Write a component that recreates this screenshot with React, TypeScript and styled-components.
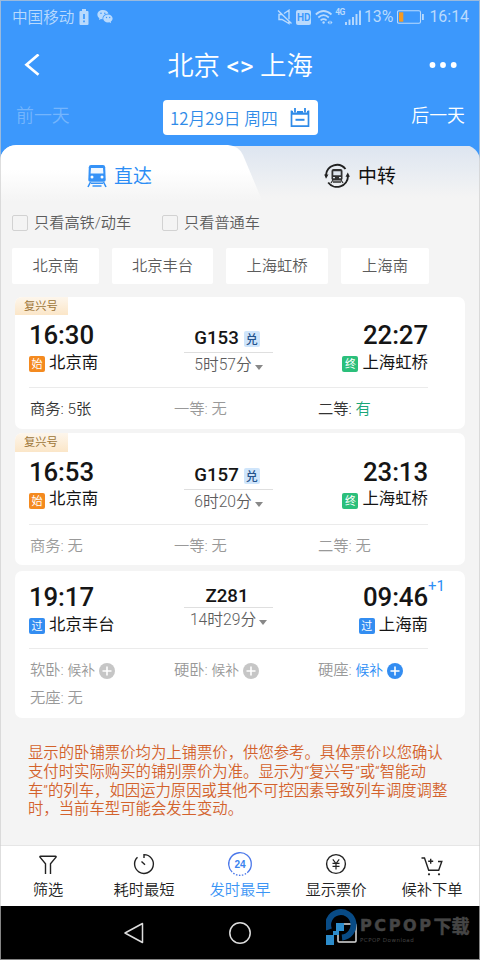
import React from 'react';
import styled, { createGlobalStyle, css } from 'styled-components';

const CJK = '"Noto Sans CJK SC", sans-serif';
const MIX = 'Roboto, "Noto Sans CJK SC", sans-serif';

const Global = createGlobalStyle`
  * { box-sizing: border-box; }
  body { margin: 0; background: #f4f4f4; font-family: ${MIX}; }
`;

const Screen = styled.div`
  position: relative;
  display: flex;
  flex-direction: column;
  width: 480px;
  height: 960px;
  overflow: hidden;
  background: #f4f4f4;
  white-space: nowrap;
  &::after {
    content: '';
    position: absolute;
    inset: 0;
    border: 1px solid rgba(205, 205, 205, 0.65);
    pointer-events: none;
  }
`;

const Header = styled.header`
  height: 165px;
  margin-bottom: -20px;
  background: #3c98fc;
  color: #fff;
`;

const StatusBar = styled.div`
  display: flex;
  justify-content: space-between;
  height: 34px;
  padding: 0 11px 0 12px;
  color: #b9dafd;
  line-height: 34px;
`;

const StatusGroup = styled.div`
  display: flex;
  align-items: center;
`;

const Carrier = styled.span`
  margin-right: 5px;
  font: 350 15.6px/30px ${CJK};
  margin-top: -3px;
`;

const WechatSlot = styled.span`
  display: flex;
  margin-left: 8px;
`;

const ChargeSlot = styled.span`
  display: flex;
  margin-left: 4px;
`;

const StatusValue = styled.span<{ $gap: number }>`
  margin-left: ${(p) => p.$gap}px;
  font-size: 15.9px;
`;

const HdBadge = styled.span`
  width: 15px;
  height: 15px;
  margin: 0 4px 0 3px;
  border-radius: 2px;
  background: #b9dafd;
  color: #3c98fc;
  font: 700 10px/15px Roboto, sans-serif;
  text-align: center;
`;

const Network = styled.span`
  align-self: flex-start;
  margin: 7px 0 0 2px;
  font: 700 8.5px/10px "Roboto", sans-serif;
  letter-spacing: -0.5px;
`;

const TitleBar = styled.div`
  display: grid;
  grid-template-columns: 60px 1fr 60px;
  align-items: center;
  height: 62px;
`;

const Title = styled.h1`
  margin: 0;
  font: 350 26.4px/64px ${MIX};
  text-align: center;
`;

const Arrows = styled.span`
  font-weight: 400;
`;

const DateRow = styled.div`
  display: grid;
  grid-template-columns: 147px 155px 147px;
  align-items: center;
  height: 35px;
  margin: 4px 0 0 16px;
`;

const DayLink = styled.span<{ $dim?: boolean }>`
  font: 350 17.9px/30px ${CJK};
  color: ${(p) => (p.$dim ? '#74b5fd' : '#fff')};
  text-align: ${(p) => (p.$dim ? 'left' : 'right')};
  margin-top: -8px;
`;

const DateBox = styled.div`
  display: flex;
  align-items: center;
  justify-content: space-between;
  height: 35px;
  padding: 0 8px 0 7px;
  border-radius: 4px;
  background: #fff;
  color: #2f8be8;
  font: 350 16.8px/32px ${CJK};
`;

const Tabs = styled.div`
  position: relative;
  flex: none;
  display: grid;
  grid-template-columns: 240px 240px;
  height: 60px;
  border-radius: 16px 16px 0 0;
  background: linear-gradient(#3c98fc 1px, transparent 1px),
    linear-gradient(#dde5f0, #f4f4f4 88%);
  overflow: hidden;
`;

const TabShape = styled.div`
  grid-area: 1 / 1 / 2 / 3;
  width: 264px;
  background: linear-gradient(#fff 40%, #f4f4f4 92%);
  clip-path: path('M0 0 H228 Q239 1 243 10 L264 60 H0 Z');
`;

const Tab = styled.div<{ $column: number; $active?: boolean }>`
  grid-area: 1 / ${(p) => p.$column};
  z-index: 1;
  display: flex;
  align-items: center;
  gap: ${(p) => (p.$active ? 7 : 8)}px;
  padding-left: ${(p) => (p.$active ? 87 : 84)}px;
  height: 62px;
  color: ${(p) => (p.$active ? '#2c8df5' : '#111')};
  font: 400 18.9px/60px ${CJK};
`;

const TabLabel = styled.span`
  margin-top: -2px;
`;

const Checks = styled.div`
  display: flex;
  align-items: center;
  height: 36px;
  padding-left: 12px;
  color: #5c5c5c;
  font: 350 15.2px/37px ${MIX};
`;

const Check = styled.label<{ $width: number }>`
  display: flex;
  align-items: center;
  gap: 6px;
  width: ${(p) => p.$width}px;
`;

const Box = styled.span`
  width: 16px;
  height: 16px;
  border: 1px solid #d2d2d2;
  border-radius: 2px;
`;

const Chips = styled.div`
  display: grid;
  grid-template-columns: 87px 101px 102px 88px;
  column-gap: 13px;
  height: 36px;
  margin: 7px 0 13px 12px;
`;

const Chip = styled.button`
  padding: 0 0 4px 0;
  border: 0;
  border-radius: 2px;
  background: #fff;
  color: #5c5c5c;
  font: 350 15.3px/32px ${CJK};
`;

const Card = styled.article<{ $height: number; $gap: number }>`
  flex: none;
  display: flex;
  flex-direction: column;
  height: ${(p) => p.$height}px;
  margin: 0 15px ${(p) => p.$gap}px;
  border-radius: 7px;
  background: #fff;
  overflow: hidden;
`;

const Tag = styled.div<{ $height: number }>`
  width: 53px;
  height: ${(p) => p.$height}px;
  padding-left: 9px;
  background: linear-gradient(#fdf6ec, #fbe6c8);
  color: #9c7537;
  font: 400 11.3px/${(p) => p.$height - 2}px ${CJK};
`;

const Trip = styled.div<{ $top: number; $height: number }>`
  display: grid;
  grid-template-columns: 140px 1fr 140px;
  height: ${(p) => p.$height}px;
  margin: 0 37px 0 14px;
  padding-top: ${(p) => p.$top}px;
  border-bottom: 1px solid #ebebeb;
`;

const Stop = styled.div<{ $end?: boolean }>`
  display: flex;
  flex-direction: column;
  align-items: ${(p) => (p.$end ? 'flex-end' : 'flex-start')};
`;

const Time = styled.div`
  position: relative;
  height: 28px;
  font: 500 25.8px/28px Roboto, sans-serif;
  letter-spacing: -0.1px;
  color: #151515;
`;

const DayOffset = styled.sup`
  position: absolute;
  left: 100%;
  top: -6px;
  color: #2c8df5;
  font: 400 15px/18px Roboto, sans-serif;
`;

const Station = styled.div`
  display: flex;
  align-items: center;
  height: 27px;
  gap: 4px;
  color: #151515;
  font: 400 16.4px/26px ${CJK};
`;

const StationName = styled.span<{ $lift: number }>`
  margin-top: ${(p) => -p.$lift}px;
`;

const badgeColors = { 始: '#f48a1f', 终: '#2bbf7b', 过: '#338df1' } as const;
type Kind = keyof typeof badgeColors;

const Badge = styled.span<{ $kind: Kind }>`
  width: 16px;
  height: 16px;
  margin-top: 3px;
  border-radius: 2px;
  background: ${(p) => badgeColors[p.$kind]};
  color: #fff;
  font: 400 11px/15px ${CJK};
  text-align: center;
`;

const Middle = styled.div<{ $shift: number }>`
  display: flex;
  flex-direction: column;
  align-items: center;
  padding-top: ${(p) => p.$shift}px;
`;

const Train = styled.div`
  display: flex;
  align-items: center;
  gap: 5px;
  height: 24px;
  margin-left: -3px;
  color: #151515;
  font: 500 18.7px/24px Roboto, sans-serif;
`;

const Exchange = styled.span`
  width: 16px;
  height: 16px;
  margin-top: 1px;
  border-radius: 2px;
  background: #cfe5fb;
  color: #24538c;
  font: 500 12px/15px ${CJK};
  text-align: center;
`;

const Track = styled.div<{ $gap: number }>`
  flex: none;
  width: 89px;
  height: 1px;
  margin-top: ${(p) => p.$gap}px;
  background: #dfdfdf;
`;

const Duration = styled.div`
  display: flex;
  align-items: center;
  gap: 3px;
  height: 24px;
  color: #5c5c5c;
  font: 350 15.7px/24px ${MIX};
`;

const Caret = styled.span`
  margin-top: 4px;
  border: 4.5px solid transparent;
  border-top: 5.5px solid #888;
  border-bottom: 0;
`;

const Seats = styled.div<{ $top: number }>`
  display: grid;
  grid-template-columns: repeat(3, 144px);
  grid-auto-rows: 28px;
  padding: ${(p) => p.$top}px 0 0 15px;
`;

const tones = { dark: '#333', muted: '#999' };

const Seat = styled.div<{ $tone: keyof typeof tones }>`
  display: flex;
  align-items: center;
  color: ${(p) => tones[p.$tone]};
  font: 350 15.3px/28px ${MIX};
  white-space: pre;
`;

const Value = styled.span<{ $color?: string; $small?: boolean }>`
  ${(p) => p.$color && css`color: ${p.$color};`}
  ${(p) => p.$small && css`font-size: 13.8px;`}
`;

const Plus = styled.span<{ $active?: boolean }>`
  display: grid;
  place-items: center;
  width: 16px;
  height: 16px;
  margin: 1px 0 0 4px;
  border-radius: 50%;
  background: ${(p) => (p.$active ? '#338df1' : '#c6c6c6')};
`;

const Notice = styled.p`
  flex: 1;
  margin: 0;
  padding: 26px 0 0 28px;
  color: #d3622c;
  font: 350 15.36px/18.75px ${MIX};
  white-space: pre;
`;

const BottomNav = styled.nav`
  flex: none;
  display: grid;
  grid-template-columns: repeat(5, 96px);
  height: 61px;
  border-top: 1px solid #e6e6e6;
  background: #fff;
`;

const NavItem = styled.div<{ $active?: boolean }>`
  display: flex;
  flex-direction: column;
  align-items: center;
  padding-top: 4px;
  color: ${(p) => (p.$active ? '#3b95f5' : '#222')};
  font: 350 15.3px/20px ${CJK};
`;

const SystemBar = styled.footer`
  position: relative;
  flex: none;
  display: grid;
  grid-template-columns: 80px 107px 106px 107px 80px;
  place-items: center;
  height: 54px;
  background: #000;
`;

const Key = styled.span<{ $column: number }>`
  grid-column: ${(p) => p.$column};
  height: 24px;
`;

const Watermark = styled.div`
  position: absolute;
  left: 326px;
  top: 3px;
  display: flex;
  gap: 3px;
`;

const Brand = styled.div`
  display: flex;
  flex-direction: column;
  padding-top: 8px;
  color: #454545;
`;

const BrandName = styled.span`
  display: flex;
  height: 18px;
  font: 700 16px/18px "DejaVu Sans", sans-serif;
  letter-spacing: 2.6px;
  -webkit-text-stroke: 0.5px #454545;
`;

const BrandSuffix = styled.span`
  font: 700 18px/16px ${CJK};
  letter-spacing: 0;
`;

const BrandSub = styled.span`
  margin-top: 2px;
  font: 400 5.5px/7px "DejaVu Sans", sans-serif;
  letter-spacing: 0.5px;
`;

const Battery = () => (
  <svg width="10" height="17" viewBox="0 0 10 17">
    <path d="M3 0h4v2h1.5q1 0 1 1v12q0 1-1 1h-7q-1 0-1-1V3q0-1 1-1H3z" fill="#b9dafd" />
    <path d="M5 5v5M5 11.5v1.8" stroke="#3c98fc" strokeWidth="1.7" />
  </svg>
);

const Wechat = () => (
  <svg width="16" height="14" viewBox="0 0 16 14">
    <path d="M6 0C2.7 0 .4 2 .4 4.7c0 1.5.8 2.7 2 3.6L2 10l2-1 1.6.3C5.2 6 7.7 3.7 11.5 3.6 11 1.5 8.8 0 6 0z" fill="#b9dafd" />
    <path d="M11 4.5c-2.7 0-4.8 1.7-4.8 4s2.1 4 4.8 4l1.4-.2 1.7.9-.4-1.5c1.1-.7 1.9-1.8 1.9-3.2 0-2.3-2-4-4.6-4z" fill="#b9dafd" />
    <g fill="#3c98fc"><circle cx="4" cy="3.2" r=".8" /><circle cx="7.8" cy="3.2" r=".8" /><circle cx="9.5" cy="7.5" r=".7" /><circle cx="12.7" cy="7.5" r=".7" /></g>
  </svg>
);

const Muted = () => (
  <svg width="16" height="16" viewBox="0 0 16 16" fill="none" stroke="#b9dafd" strokeWidth="1.4">
    <path d="M7 4.5l5-3.3v9M5.5 5.5H2v5h3l7 4v-2M1 1.5l13.500 13" />
  </svg>
);

const Wifi = () => (
  <svg width="18" height="16" viewBox="0 0 18 16" fill="none" stroke="#b9dafd" strokeWidth="1.7">
    <path d="M.8 5.5Q8.5-1.5 16.5 5.5M3.3 8.5q5.3-4.6 10.5 0M5.6 11.3q3-2.5 6 0" />
    <circle cx="8.6" cy="13.5" r="1.2" fill="#b9dafd" stroke="none" />
    <path d="M12.5 13.5l2-2v4zM17.5 13.5l-2-2v4z" fill="#b9dafd" stroke="none" />
  </svg>
);

const Signal = () => (
  <svg width="16" height="15" viewBox="0 0 16 15" stroke="#b9dafd" strokeWidth="1.9">
    <path d="M1 15v-3M4.5 15V9.5M8 15V7M11.5 15V4M15 15V.5" />
  </svg>
);

const Charge = () => (
  <svg width="27" height="14" viewBox="0 0 27 14">
    <rect x=".5" y=".7" width="23" height="12.6" rx="1.5" fill="none" stroke="#b9dafd" strokeWidth="1.1" />
    <rect x="2" y="2.3" width="4.3" height="9.4" fill="#f59a23" />
    <rect x="25" y="4" width="1.8" height="6" fill="#b9dafd" />
  </svg>
);

const BackIcon = () => (
  <svg width="60" height="24" viewBox="0 0 60 24" fill="none" stroke="#fff" strokeWidth="2.7">
    <path d="M38.5 .5L26.500 10.800l12 10" />
  </svg>
);

const Dots = () => (
  <svg width="60" height="8" viewBox="0 0 60 8" fill="#fff">
    <circle cx="12.5" cy="3" r="2.9" /><circle cx="23" cy="3" r="2.9" /><circle cx="33.7" cy="3" r="2.9" />
  </svg>
);

const Calendar = () => (
  <svg width="20" height="20" viewBox="0 0 20 20" fill="none" stroke="#2f8be8">
    <path d="M1.5 2.5v15.7h17V2.5M1.5 6h17" strokeWidth="1.7" />
    <path d="M1.5 4.5h17" strokeWidth="3" />
    <path d="M5 0v4.5M15 0v4.5" stroke="#fff" strokeWidth="4" />
    <path d="M5 0v4.5M15 0v4.5" strokeWidth="1.8" />
    <path d="M5.5 11.8h9" strokeWidth="2" />
  </svg>
);

const TrainIcon = () => (
  <svg width="20" height="24" viewBox="0 0 20 24" fill="#3592f7">
    <path d="M4 1h12q2 0 2.2 2.2L18.7 16q0 1.8-1.8 1.8H3.1q-1.8 0-1.8-1.8L1.8 3.2Q2 1 4 1z" />
    <path d="M4 4h12l.4 5.5H3.6z" fill="#f0f7ff" />
    <circle cx="5" cy="13" r="1.5" fill="#fff" /><circle cx="15" cy="13" r="1.5" fill="#fff" />
    <path d="M3.5 18L1 23M16.5 18l2.5 5M5.5 22h9M4 19.300h12" stroke="#3592f7" strokeWidth="1.6" />
  </svg>
);

const TransferIcon = () => (
  <svg width="26" height="26" viewBox="0 0 26 26">
    <g fill="none" stroke="#222" strokeWidth="1.9">
      <path d="M2 12A11 11 0 0 1 21.5 6" />
      <path d="M24 13A11 11 0 0 1 4.2 19.5" />
    </g>
    <path d="M.2 11.5h4.3L2 15.8zM21.5 13.8h4.4L23.8 9.5z" fill="#222" />
    <rect x="7.5" y="6" width="11" height="11.5" rx="2" fill="#333" />
    <path d="M9.3 8.3h7.4v3.9H9.3z" fill="#dfe6ef" />
    <path d="M9 14.700h2M15 14.700h2" stroke="#dfe6ef" strokeWidth="1.3" />
    <path d="M9 17l-2 3M17 17l2 3M9 19h8" stroke="#333" strokeWidth="1.3" />
  </svg>
);

const PlusIcon = ({ active }: { active?: boolean }) => (
  <Plus $active={active}>
    <svg width="10" height="10" viewBox="0 0 10 10" stroke="#fff" strokeWidth="1.6"><path d="M5 .5v9M.5 5h9" /></svg>
  </Plus>
);

const navIcons = {
  filter: (
    <path d="M6.5 6.200h15q1 0 .5 1l-5.5 6.500V24M11.500 24v-10.300L6 7.200q-.5-1 .5-1" />
  ),
  timer: (
    <path d="M14 8V4.6a9.400 9.400 0 1 1-6.500 2.600M11.500 11.500l3.500 3.300" />
  ),
  early: (
    <>
      <circle cx="14" cy="14" r="11.3" stroke="#4b78ea" strokeWidth="1.3" strokeDasharray="46 1.5 1.5 1.5 1.5 1.5 1.5 1.5 1.5 1.5 1.5 1.5 60" transform="rotate(175 14 14)" />
      <text x="14" y="17.6" textAnchor="middle" fontFamily="Liberation Sans, sans-serif" fontWeight="700" fontSize="10" fill="#3b83ee" stroke="none">24</text>
    </>
  ),
  price: (
    <>
      <circle cx="14" cy="14" r="9.4" />
      <path d="M10.8 9.3L14 13.5l3.2-4.2M14 13.5v6M10.500 13.300h7M10.500 16.300h7" strokeWidth="1.2" />
    </>
  ),
  cart: (
    <>
      <path d="M3.5 8h3l4.2 12.200h10L23.800 11.500H20M12.700 8.800v5M10.200 11.300h5" />
      <circle cx="11" cy="24.3" r="1.1" fill="#222" stroke="none" /><circle cx="21" cy="24.3" r="1.1" fill="#222" stroke="none" />
    </>
  ),
};

const navItems: { icon: keyof typeof navIcons; label: string; active?: boolean }[] = [
  { icon: 'filter', label: '筛选' },
  { icon: 'timer', label: '耗时最短' },
  { icon: 'early', label: '发时最早', active: true },
  { icon: 'price', label: '显示票价' },
  { icon: 'cart', label: '候补下单' },
];

interface SeatInfo { name: string; value: string; tone?: 'dark'; color?: string; wait?: boolean }
interface TrainInfo {
  no: string; tag?: number; exchange?: boolean; duration: string;
  depart: string; arrive: string; offset?: string;
  from: [Kind, string]; to: [Kind, string];
  height: number; gap: number; top: number; trip: number; shift: number; track: number; lift: number; seatTop: number;
  seats: SeatInfo[];
}

const trains: TrainInfo[] = [
  {
    no: 'G153', tag: 18, exchange: true, duration: '5时57分', depart: '16:30', arrive: '22:27',
    from: ['始', '北京南'], to: ['终', '上海虹桥'],
    height: 132, gap: 4, top: 6, trip: 73, shift: 5, track: 2, lift: 3, seatTop: 7,
    seats: [
      { name: '商务', value: '5张', tone: 'dark' },
      { name: '一等', value: '无' },
      { name: '二等', value: '有', tone: 'dark', color: '#1aa678' },
    ],
  },
  {
    no: 'G157', tag: 19, exchange: true, duration: '6时20分', depart: '16:53', arrive: '23:13',
    from: ['始', '北京南'], to: ['终', '上海虹桥'],
    height: 132, gap: 6, top: 6, trip: 73, shift: 5, track: 2, lift: 5, seatTop: 7,
    seats: [
      { name: '商务', value: '无' },
      { name: '一等', value: '无' },
      { name: '二等', value: '无' },
    ],
  },
  {
    no: 'Z281', duration: '14时29分', depart: '19:17', arrive: '09:46', offset: '+1',
    from: ['过', '北京丰台'], to: ['过', '上海南'],
    height: 147, gap: 0, top: 12, trip: 78, shift: 1, track: -1, lift: 4, seatTop: 7,
    seats: [
      { name: '软卧', value: '候补', wait: true },
      { name: '硬卧', value: '候补', wait: true },
      { name: '硬座', value: '候补', wait: true, color: '#2c8df5' },
      { name: '无座', value: '无' },
    ],
  },
];

const TrainCard = ({ t }: { t: TrainInfo }) => (
  <Card $height={t.height} $gap={t.gap}>
    {t.tag && <Tag $height={t.tag}>复兴号</Tag>}
    <Trip $top={t.top} $height={t.trip}>
      <Stop>
        <Time>{t.depart}</Time>
        <Station><Badge $kind={t.from[0]}>{t.from[0]}</Badge><StationName $lift={t.lift}>{t.from[1]}</StationName></Station>
      </Stop>
      <Middle $shift={t.shift}>
        <Train>{t.no}{t.exchange && <Exchange>兑</Exchange>}</Train>
        <Track $gap={t.track} />
        <Duration>{t.duration}<Caret /></Duration>
      </Middle>
      <Stop $end>
        <Time>{t.arrive}{t.offset && <DayOffset>{t.offset}</DayOffset>}</Time>
        <Station><Badge $kind={t.to[0]}>{t.to[0]}</Badge><StationName $lift={t.lift}>{t.to[1]}</StationName></Station>
      </Stop>
    </Trip>
    <Seats $top={t.seatTop}>
      {t.seats.map((s) => (
        <Seat key={s.name} $tone={s.tone ?? 'muted'}>
          {s.name + ': '}
          <Value $color={s.color} $small={s.wait}>{s.value}</Value>
          {s.wait && <PlusIcon active={!!s.color} />}
        </Seat>
      ))}
    </Seats>
  </Card>
);

const noticeLines = [
  '显示的卧铺票价均为上铺票价，供您参考。具体票价以您确认',
  '支付时实际购买的铺别票价为准。显示为“复兴号”或“智能动',
  '车”的列车，如因运力原因或其他不可控因素导致列车调度调整',
  '时，当前车型可能会发生变动。',
];

export default function App() {
  return (
    <>
      <Global />
      <Screen>
        <Header>
          <StatusBar>
            <StatusGroup>
              <Carrier>中国移动</Carrier>
              <Battery />
              <WechatSlot><Wechat /></WechatSlot>
            </StatusGroup>
            <StatusGroup>
              <Muted /><HdBadge>HD</HdBadge><Wifi /><Network>4G</Network><Signal />
              <StatusValue $gap={3}>13%</StatusValue>
              <ChargeSlot><Charge /></ChargeSlot>
              <StatusValue $gap={5}>16:14</StatusValue>
            </StatusGroup>
          </StatusBar>
          <TitleBar>
            <BackIcon />
            <Title>北京 <Arrows>&lt;&gt;</Arrows> 上海</Title>
            <Dots />
          </TitleBar>
          <DateRow>
            <DayLink $dim>前一天</DayLink>
            <DateBox><span>12月29日 周四</span><Calendar /></DateBox>
            <DayLink>后一天</DayLink>
          </DateRow>
        </Header>
        <Tabs>
          <TabShape />
          <Tab $column={1} $active><TrainIcon /><TabLabel>直达</TabLabel></Tab>
          <Tab $column={2}><TransferIcon /><TabLabel>中转</TabLabel></Tab>
        </Tabs>
        <Checks>
          <Check $width={150}><Box />只看高铁/动车</Check>
          <Check $width={120}><Box />只看普通车</Check>
        </Checks>
        <Chips>
          {['北京南', '北京丰台', '上海虹桥', '上海南'].map((c) => <Chip key={c}>{c}</Chip>)}
        </Chips>
        {trains.map((t) => <TrainCard key={t.no} t={t} />)}
        <Notice>{noticeLines.join('\n')}</Notice>
        <BottomNav>
          {navItems.map((n) => (
            <NavItem key={n.icon} $active={n.active}>
              <svg width="28" height="28" viewBox="0 0 28 28" fill="none" stroke="#222" strokeWidth="1.4">{navIcons[n.icon]}</svg>
              {n.label}
            </NavItem>
          ))}
        </BottomNav>
        <SystemBar>
          <Key $column={2}>
            <svg width="24" height="24" viewBox="0 0 24 24" fill="none" stroke="#ddd" strokeWidth="1.5"><path d="M20.5 2.500v19L3 12z" strokeLinejoin="round" /></svg>
          </Key>
          <Key $column={3}>
            <svg width="24" height="24" viewBox="0 0 24 24" fill="none" stroke="#ddd" strokeWidth="1.5"><circle cx="12" cy="12" r="10.2" /></svg>
          </Key>
          <Key $column={4}>
            <svg width="24" height="24" viewBox="0 0 24 24" fill="none" stroke="#ddd" strokeWidth="1.5"><rect x="3" y="3" width="18" height="18" rx="1" /></svg>
          </Key>
          <Watermark>
            <svg width="31" height="37" viewBox="0 0 31 37">
              <path d="M3 20.5A12.7 12.7 0 1 1 16 28.5" fill="none" stroke="#084b86" strokeWidth="6" />
              <path d="M10 14h8v8h-5v4H7v-4h3z" fill="#2c8ccb" />
              <path d="M0 26h8v10H0z" fill="#2c8ccb" />
            </svg>
            <Brand>
              <BrandName>PCPOP<BrandSuffix>下载</BrandSuffix></BrandName>
              <BrandSub>PCPOP Download</BrandSub>
            </Brand>
          </Watermark>
        </SystemBar>
      </Screen>
    </>
  );
}
